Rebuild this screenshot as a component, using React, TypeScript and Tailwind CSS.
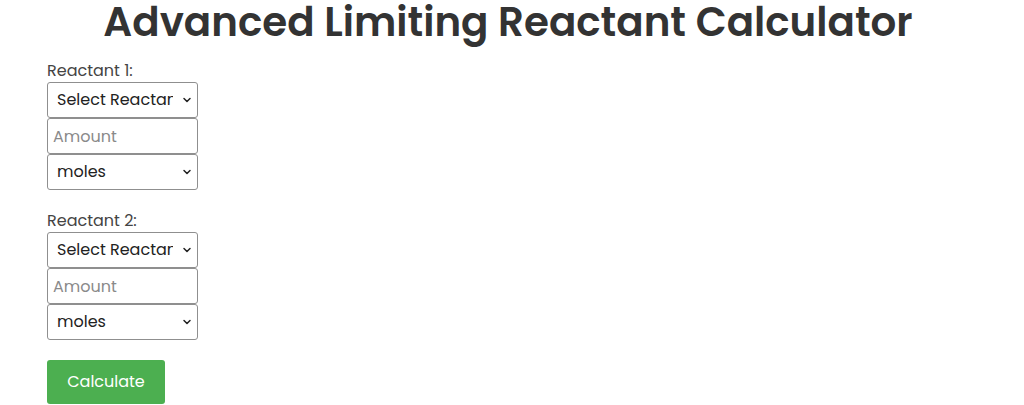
import { useState } from "react";
import { ChevronDown } from "lucide-react";

const REACTANTS = ["Select Reactant", "H2", "O2", "N2", "CH4", "C3H8", "NaCl"];
const UNITS = ["moles", "grams", "liters"];

const FONT = { fontFamily: '"Poppins", "Noto Sans", "Open Sans", sans-serif' };

function SelectBox({
  value,
  options,
  onChange,
}: {
  value: string;
  options: string[];
  onChange: (v: string) => void;
}) {
  return (
    <div className="relative w-[151px] h-[36px]">
      <select
        value={value}
        onChange={(e) => onChange(e.target.value)}
        className="appearance-none w-full h-full border border-[#8f8f8f] rounded-[3px] bg-white pl-[9px] pr-[24px] text-[16px] text-[#222] outline-none overflow-hidden whitespace-nowrap"
        style={FONT}
      >
        {options.map((o) => (
          <option key={o} value={o}>
            {o}
          </option>
        ))}
      </select>
      <ChevronDown
        className="w-[12px] h-[12px] absolute right-[5px] top-[12px] text-[#222] pointer-events-none"
        strokeWidth={3}
      />
    </div>
  );
}

function ReactantGroup({ index }: { index: number }) {
  const [reactant, setReactant] = useState(REACTANTS[0]);
  const [amount, setAmount] = useState("");
  const [unit, setUnit] = useState(UNITS[0]);

  return (
    <div className="flex flex-col">
      <label className="text-[16px] leading-[22px] text-[#444]" style={FONT}>
        Reactant {index}:
      </label>
      <SelectBox value={reactant} options={REACTANTS} onChange={setReactant} />
      <input
        type="number"
        placeholder="Amount"
        value={amount}
        onChange={(e) => setAmount(e.target.value)}
        className="w-[151px] h-[36px] border border-[#8f8f8f] rounded-[3px] px-[5px] text-[16px] text-[#222] placeholder:text-[#8a8a8a] outline-none [appearance:textfield] [&::-webkit-inner-spin-button]:appearance-none"
        style={FONT}
      />
      <SelectBox value={unit} options={UNITS} onChange={setUnit} />
    </div>
  );
}

export default function App() {
  return (
    <div className="w-full min-h-[405px] bg-white text-[#333]" style={FONT}>
      <h1 className="text-center text-[40.4px] font-semibold leading-[44px] text-[#333] pr-[8px]">
        Advanced Limiting Reactant Calculator
      </h1>
      <div className="pl-[47px] pt-[16px] flex flex-col gap-[20px]">
        <ReactantGroup index={1} />
        <ReactantGroup index={2} />
        <div>
          <button
            className="w-[118px] h-[44px] bg-[#4caf50] text-white text-[16px] rounded-[3px] cursor-pointer"
            style={FONT}
          >
            Calculate
          </button>
        </div>
      </div>
    </div>
  );
}
